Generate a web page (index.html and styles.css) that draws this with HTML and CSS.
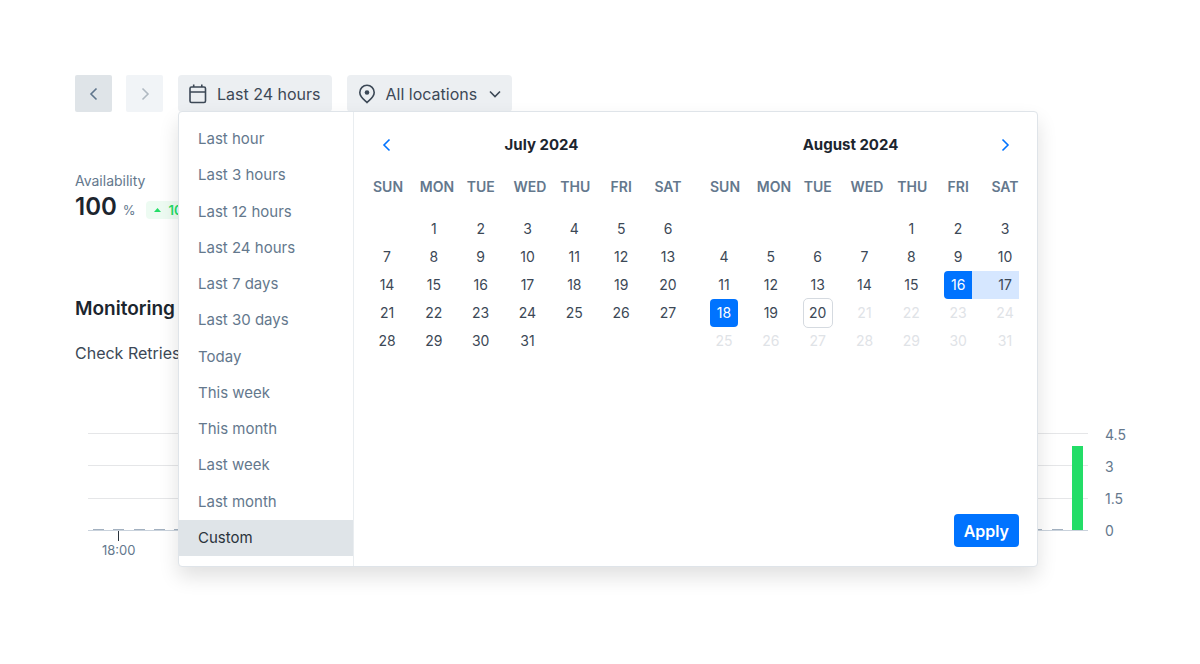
FILE: index.html
```html
<!DOCTYPE html>
<html lang="en">
<head>
  <meta charset="UTF-8">
  <meta name="viewport" content="width=device-width, initial-scale=1.0">
  <title>Monitoring</title>
  <link rel="stylesheet" href="styles.css">
</head>
<body>
  <main class="page">
    <div class="toolbar">
      <div class="steps">
        <button class="btn btn-step" type="button" aria-label="Previous period">
          <svg width="10" height="14" viewBox="0 0 10 14"><path d="M7.500 1.500 2 7l5.500 5.500"/></svg>
        </button>
        <button class="btn btn-step" type="button" aria-label="Next period" disabled>
          <svg width="10" height="14" viewBox="0 0 10 14"><path d="M2.500 1.500 8 7l-5.500 5.500"/></svg>
        </button>
      </div>

      <div class="picker">
        <button class="btn" type="button" aria-expanded="true">
          <svg width="18" height="20" viewBox="0 0 18 20"><rect x="1" y="3" width="15.500" height="15.500" rx="1.500"/><path d="M1 8h15.500M4.700 0.500V3M12.800 0.500V3"/></svg>
          Last 24 hours
        </button>

        <div class="popover">
          <ul class="ranges">
            <li><button type="button">Last hour</button></li>
            <li><button type="button">Last 3 hours</button></li>
            <li><button type="button">Last 12 hours</button></li>
            <li><button type="button">Last 24 hours</button></li>
            <li><button type="button">Last 7 days</button></li>
            <li><button type="button">Last 30 days</button></li>
            <li><button type="button">Today</button></li>
            <li><button type="button">This week</button></li>
            <li><button type="button">This month</button></li>
            <li><button type="button">Last week</button></li>
            <li><button type="button">Last month</button></li>
            <li><button type="button" class="active">Custom</button></li>
          </ul>

          <div class="calendar">
            <div class="months">
              <section class="month">
                <header class="month-header">
                  <button class="month-nav" type="button" aria-label="Previous month">
                    <svg width="10" height="14" viewBox="0 0 10 14"><path d="M7.500 1.500 2 7l5.500 5.500"/></svg>
                  </button>
                  <h2>July 2024</h2>
                </header>
                <table class="days" data-start="1" data-days="31"></table>
              </section>
              <section class="month">
                <header class="month-header">
                  <h2>August 2024</h2>
                  <button class="month-nav" type="button" aria-label="Next month">
                    <svg width="10" height="14" viewBox="0 0 10 14"><path d="M2.500 1.500 8 7l-5.500 5.500"/></svg>
                  </button>
                </header>
                <table class="days" data-start="4" data-days="31" data-from="16" data-to="18" data-today="20"></table>
              </section>
            </div>
            <button class="apply" type="button">Apply</button>
          </div>
        </div>
      </div>

      <button class="btn" type="button">
        <svg width="18" height="20" viewBox="0 0 18 20"><path d="M9 18.500C7 16.500 1.800 13.200 1.800 8.500a7.200 7.200 0 0 1 14.400 0C16.200 13.200 11 16.500 9 18.500Z"/><circle class="dot" cx="9" cy="8.500" r="2.300"/></svg>
        All locations
        <svg class="caret" width="12" height="8" viewBox="0 0 12 8"><path d="m1 1.500 5 5 5-5"/></svg>
      </button>
    </div>

    <section class="stat">
      <div class="stat-label">Availability</div>
      <div class="stat-row">
        <span class="stat-value">100</span>
        <span class="stat-unit">%</span>
        <span class="stat-badge"><svg width="7" height="4" viewBox="0 0 7 4"><path d="M3.500 0 7 4H0Z"/></svg>100</span>
      </div>
    </section>

    <h1 class="section-title">Monitoring</h1>
    <p class="chart-title">Check Retries</p>

    <div class="chart">
      <div class="plot">
        <div class="lines"><i></i><i></i><i></i><i></i></div>
        <div class="bars" id="bars"></div>
      </div>
      <div class="y-axis"><span>4.5</span><span>3</span><span>1.5</span><span>0</span></div>
    </div>
    <div class="x-axis"><span>18:00</span></div>
  </main>

  <script src="script.js"></script>
</body>
</html>
```

FILE: script.js
```js
const weekdays = ['SUN', 'MON', 'TUE', 'WED', 'THU', 'FRI', 'SAT'];

document.querySelectorAll('.days').forEach(table => {
  const { start, days, from, to, today } = table.dataset;
  let html = '<thead><tr>' + weekdays.map(d => `<th scope="col"><span>${d}</span></th>`).join('') + '</tr></thead><tbody>';
  for (let i = 0; i < 35; i++) {
    const day = i - start + 1;
    if (i % 7 === 0) html += '<tr>';
    if (day < 1 || day > days) {
      html += '<td></td>';
    } else {
      const between = from && day > from && day < to;
      let cls = 'day';
      if (day == from) cls += ' selected range-start';
      if (day == to) cls += ' selected';
      if (day == today) cls += ' today';
      html += `<td${between ? ' class="in-range"' : ''}><button type="button" class="${cls}"${today && day > today ? ' disabled' : ''}>${day}</button></td>`;
    }
    if (i % 7 === 6) html += '</tr>';
  }
  table.innerHTML = html + '</tbody>';
});

// half-hour buckets, only the last one has retries
const retries = Array(48).fill(0).concat(4);
const max = 4.6;
document.getElementById('bars').innerHTML = retries
  .map(v => `<div class="slot"><div class="${v ? 'bar' : 'bar empty'}" style="height:${v / max * 100}%"></div></div>`)
  .join('');
```

FILE: styles.css
```css
* {
  margin: 0;
  padding: 0;
  box-sizing: border-box;
}

body {
  font-family: Inter, "Liberation Sans", sans-serif;
  font-size: 15px;
  line-height: 20px;
  color: #3c4856;
  background: #fff;
}

button {
  font: inherit;
  color: inherit;
  background: none;
  border: 0;
  cursor: pointer;
}

svg {
  flex: none;
  fill: none;
  stroke: currentColor;
  stroke-width: 1.6;
}

.page {
  padding: 75px 75px 40px;
}

/* Toolbar */
.toolbar {
  display: flex;
  gap: 15px;
}

.steps {
  display: flex;
  gap: 14px;
}

.btn {
  display: flex;
  align-items: center;
  justify-content: center;
  gap: 10px;
  height: 37px;
  padding: 0 11px;
  font-size: 16px;
  background: #eceff2;
  border-radius: 4px;
}

.btn-step {
  width: 37px;
  color: #5f758c;
  background: #dfe4e8;
  border-radius: 2px;
}

.btn-step:disabled {
  color: #b0b9c2;
  background: #f1f4f7;
}

.caret {
  margin-left: 2px;
}

.dot {
  fill: currentColor;
  stroke: none;
}

/* Date picker */
.picker {
  position: relative;
}

.popover {
  position: absolute;
  top: 36px;
  left: 0;
  z-index: 10;
  display: flex;
  width: 860px;
  min-height: 456px;
  background: #fff;
  border: 1px solid #dfe4e9;
  border-radius: 4px;
  box-shadow: 0 10px 20px rgba(0, 0, 0, 0.12);
}

.ranges {
  display: flex;
  flex-direction: column;
  width: 175px;
  padding: 9px 0 10px;
  list-style: none;
  border-right: 1px solid #e9edf0;
}

.ranges li {
  display: flex;
  flex: 1;
}

.ranges button {
  flex: 1;
  padding: 0 19px;
  text-align: left;
  color: #64788d;
}

.ranges .active {
  color: #2a333c;
  background: #dfe4e8;
}

.calendar {
  display: flex;
  flex: 1;
  flex-direction: column;
  justify-content: space-between;
  padding: 19px 18px 19px 19px;
}

.months {
  display: flex;
  gap: 28px;
}

.month {
  flex: 1;
}

.month-header {
  display: flex;
  align-items: center;
  height: 28px;
  margin-bottom: 14px;
}

.month-header h2 {
  flex: 1;
  font-size: 15px;
  font-weight: 700;
  text-align: center;
  color: #1c252e;
}

.month-nav {
  display: flex;
  align-items: center;
  justify-content: center;
  width: 28px;
  height: 28px;
  color: #0073ff;
}

.days {
  width: 100%;
  table-layout: fixed;
  border-collapse: collapse;
}

.days th,
.days td {
  height: 28px;
}

.days th:first-child {
  width: 28px;
}

.days th {
  height: 42px;
  padding-bottom: 14px;
  font-size: 14px;
  font-weight: 600;
  color: #64788d;
}

.days th span,
.day {
  display: block;
  width: 28px;
  margin-left: auto;
  text-align: center;
}

.day {
  height: 28px;
  font-size: 14px;
  border-radius: 4px;
}

.day:disabled {
  color: #dfe3e7;
}

.day.selected {
  color: #fff;
  background: #0073ff;
}

.day.range-start {
  border-radius: 4px 0 0 4px;
}

.day.today {
  outline: 1px solid #d5dae0;
}

.in-range {
  background: #d6e7ff;
}

.apply {
  align-self: flex-end;
  height: 33px;
  padding: 0 10px;
  font-size: 16px;
  font-weight: 600;
  color: #fff;
  background: #0073ff;
  border-radius: 4px;
}

/* Stats */
.stat {
  margin-top: 59px;
}

.stat-label {
  font-size: 14px;
  color: #64788d;
}

.stat-row {
  display: flex;
  align-items: center;
  height: 32px;
}

.stat-value {
  font-size: 24px;
  font-weight: 600;
  color: #1c252e;
}

.stat-unit {
  margin: 6px 10px 0 6px;
  font-size: 13px;
  color: #64788d;
}

.stat-badge {
  display: flex;
  align-items: center;
  gap: 8px;
  margin-top: 6px;
  padding: 0 8px;
  font-size: 13px;
  font-weight: 600;
  line-height: 18px;
  color: #23dd67;
  background: #edfbf2;
  border-radius: 4px;
}

.stat-badge path {
  fill: currentColor;
  stroke: none;
}

/* Retries chart */
.section-title {
  margin-top: 74px;
  font-size: 19px;
  font-weight: 600;
  line-height: 24px;
  color: #1c252e;
}

.chart-title {
  margin-top: 20px;
  font-size: 16px;
  line-height: 24px;
}

.chart {
  display: flex;
  gap: 17px;
  margin-top: 60px;
  padding-left: 13px;
}

.plot {
  position: relative;
  flex: 1;
  height: 98px;
  margin-top: 8px;
}

.lines {
  display: flex;
  flex-direction: column;
  justify-content: space-between;
  height: 100%;
}

.lines i {
  height: 1px;
  background: #e5e6e8;
}

.lines i:last-child {
  background: #c9d2dc;
}

/* bars are drawn over the grid lines */
.bars {
  position: absolute;
  inset: 0 0 1px;
  display: flex;
}

.slot {
  display: flex;
  flex: 1;
  align-items: flex-end;
  justify-content: center;
}

.bar {
  width: 11px;
  min-height: 1px;
  background: #23dd67;
}

.bar.empty {
  background: #a3b1c0;
}

.y-axis {
  display: flex;
  flex-direction: column;
  justify-content: space-between;
  width: 20px;
  height: 116px;
  font-size: 14px;
  color: #64788d;
}

.x-axis {
  display: flex;
  margin-top: -10px;
  padding-left: 27px;
  font-size: 13px;
  line-height: 18px;
  color: #64788d;
}

.x-axis span {
  display: flex;
  flex-direction: column;
  align-items: center;
}

.x-axis span::before {
  content: "";
  width: 1px;
  height: 10px;
  background: #2a333c;
}
```
